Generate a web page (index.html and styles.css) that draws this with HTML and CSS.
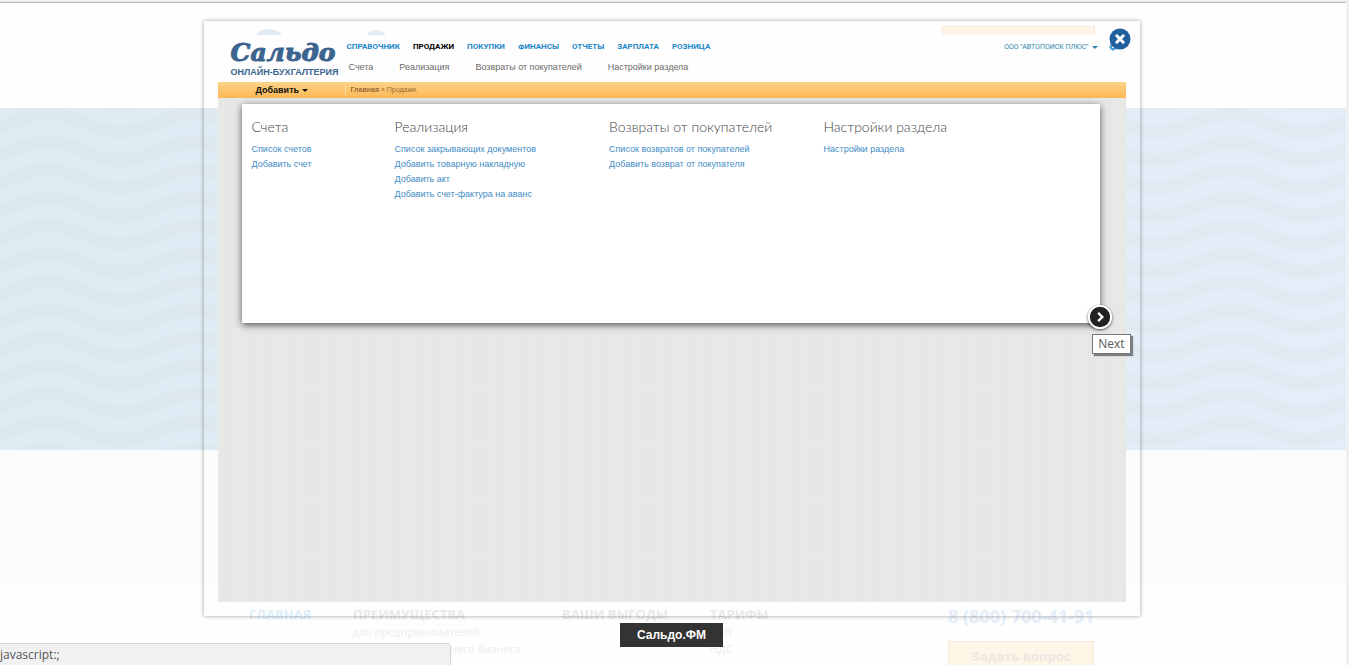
FILE: index.html
```html
<!DOCTYPE html>
<html lang="ru">
<head>
    <meta charset="UTF-8">
    <meta name="viewport" content="width=device-width, initial-scale=1.0">
    <title>Сальдо.ФМ</title>
    <link rel="stylesheet" href="styles.css">
</head>
<body>
    <div class="page">
        <header class="page-header">
            <div class="page-width page-top">
                <svg class="page-logo" width="142" height="28" viewBox="0 0 142 28" aria-hidden="true">
                    <path d="M0 14Q4 0 17 0Q30 0 34 14ZM112 10Q116 1 124 1Q133 2 137 10Z" fill="#e3eaf1"/>
                </svg>
                <button class="call-button" type="button" aria-label="Войти"></button>
            </div>
        </header>

        <section class="hero">
            <svg width="100%" height="100%" aria-hidden="true">
                <defs>
                    <pattern id="waves" width="148" height="28" patternUnits="userSpaceOnUse" x="47" y="13">
                        <path d="M0 -7C30 -7 44 11 74 11S118 -7 148 -7M0 21C30 21 44 39 74 39S118 21 148 21" fill="none" stroke="#d8e2e6" stroke-width="13" stroke-opacity="0.3"/>
                    </pattern>
                </defs>
                <rect width="100%" height="100%" fill="url(#waves)"/>
            </svg>
        </section>

        <section class="strip"></section>

        <footer class="page-footer">
            <div class="page-width footer-columns">
                <div><a class="footer-title active" href="#">ГЛАВНАЯ</a></div>
                <div>
                    <a class="footer-title" href="#">ПРЕИМУЩЕСТВА</a>
                    <a href="#">для предпринимателей</a>
                    <a href="#">для малого и среднего бизнеса</a>
                </div>
                <div><a class="footer-title" href="#">ВАШИ ВЫГОДЫ</a></div>
                <div>
                    <a class="footer-title" href="#">ТАРИФЫ</a>
                    <a href="#">УСН</a>
                    <a href="#">НДС</a>
                </div>
                <div>
                    <p class="phone">8 (800) 700-41-91</p>
                    <button class="ask-button" type="button">Задать вопрос</button>
                </div>
            </div>
        </footer>
    </div>

    <div class="overlay">
        <div class="lightbox">
            <div class="screen">
                <header class="app-header">
                    <a class="logo" href="#">
                        <span class="logo-name">Сальдо</span>
                        <span class="logo-sub">ОНЛАЙН-БУХГАЛТЕРИЯ</span>
                    </a>
                    <div class="menus">
                        <nav class="menu">
                            <a href="#">СПРАВОЧНИК</a>
                            <a class="current" href="#">ПРОДАЖИ</a>
                            <a href="#">ПОКУПКИ</a>
                            <a href="#">ФИНАНСЫ</a>
                            <a href="#">ОТЧЕТЫ</a>
                            <a href="#">ЗАРПЛАТА</a>
                            <a href="#">РОЗНИЦА</a>
                        </nav>
                        <nav class="submenu">
                            <a href="#">Счета</a>
                            <a href="#">Реализация</a>
                            <a href="#">Возвраты от покупателей</a>
                            <a href="#">Настройки раздела</a>
                        </nav>
                    </div>
                    <button class="company" type="button">
                        ООО "АВТОПОИСК ПЛЮС"
                        <span class="caret"></span>
                        <svg class="gear" width="8" height="8" viewBox="0 0 8 8" aria-hidden="true">
                            <circle cx="4" cy="4" r="2" fill="none" stroke="#1d87c9" stroke-width="1.4"/>
                            <path d="M4 0v8M0 4h8M1.2 1.2l5.6 5.6M6.8 1.2L1.2 6.8" stroke="#1d87c9" stroke-width="1" stroke-dasharray="1.6 4.8 1.6"/>
                        </svg>
                    </button>
                </header>

                <div class="toolbar">
                    <button class="add-button" type="button">Добавить <span class="caret"></span></button>
                    <p class="crumbs"><b>Главная</b> » Продажи.</p>
                </div>

                <main class="panel">
                    <section>
                        <h2>Счета</h2>
                        <a href="#">Список счетов</a>
                        <a href="#">Добавить счет</a>
                    </section>
                    <section>
                        <h2>Реализация</h2>
                        <a href="#">Список закрывающих документов</a>
                        <a href="#">Добавить товарную накладную</a>
                        <a href="#">Добавить акт</a>
                        <a href="#">Добавить счет-фактура на аванс</a>
                    </section>
                    <section>
                        <h2>Возвраты от покупателей</h2>
                        <a href="#">Список возвратов от покупателей</a>
                        <a href="#">Добавить возврат от покупателя</a>
                    </section>
                    <section>
                        <h2>Настройки раздела</h2>
                        <a href="#">Настройки раздела</a>
                    </section>
                </main>
            </div>

            <button class="close-button" type="button" aria-label="Закрыть">
                <svg width="22" height="22" viewBox="0 0 22 22">
                    <circle cx="11" cy="11" r="10.5" fill="#20609f"/>
                    <path d="M7.8 7.8l6.4 6.4M14.2 7.8l-6.4 6.4" stroke="#fff" stroke-width="3" stroke-linecap="round"/>
                </svg>
            </button>
            <button class="next-button" type="button" aria-label="Next">
                <svg width="24" height="24" viewBox="0 0 26 26">
                    <circle cx="13" cy="13" r="12" fill="#222" stroke="#fff" stroke-width="2"/>
                    <path d="M11 8.5l4.5 4.5-4.5 4.5" fill="none" stroke="#fff" stroke-width="2.6"/>
                </svg>
            </button>
            <span class="tooltip">Next</span>
        </div>
        <p class="caption">Сальдо.ФМ</p>
    </div>

    <div class="status">javascript:;</div>
</body>
</html>
```
FILE: styles.css
```css
* {
    box-sizing: border-box;
}

body {
    position: relative;
    margin: 0;
    height: 100vh;
    overflow: hidden;
    background: #fefefe;
    border-top: 2px solid #f0f0f0;
    border-right: 3px solid #f0f0f0;
    font-family: "Liberation Sans", Arial, sans-serif;
}

a {
    color: inherit;
    text-decoration: none;
}

p,
h2 {
    margin: 0;
    font-weight: normal;
}

button {
    margin: 0;
    padding: 0;
    border: none;
    background: none;
    font-family: inherit;
    cursor: pointer;
}

svg {
    display: block;
}

/* page behind the lightbox */
.page-width {
    width: 848px;
    max-width: 100%;
    margin: 0 auto;
    padding-right: 2px;
}

.page-header {
    height: 106px;
    padding-top: 23px;
    border-top: 1px solid #b4b4b4;
}

.page-top {
    display: flex;
    justify-content: space-between;
}

.page-logo {
    margin: 3px 0 0 3px;
}

.call-button {
    width: 153px;
    height: 28px;
    border: 1px solid #f9e6d9;
    background: #fff6e9;
}

.hero {
    height: 342px;
    background: linear-gradient(to right, #deebf3, #e4eef8);
}

.strip {
    height: 133px;
    background: #fbfbfb;
    border-bottom: 1px solid #f5f5f5;
}

.page-footer {
    padding-top: 22px;
    font-family: "Open Sans", sans-serif;
}

.footer-columns {
    display: grid;
    grid-template-columns: 104px 209px 148px 238px 1fr;
}

.footer-columns a {
    display: block;
    font-size: 11px;
    line-height: 17px;
    color: #ededed;
    white-space: nowrap;
}

.footer-columns .footer-title {
    font-size: 13px;
    line-height: 18px;
    font-weight: bold;
    color: #e9e9e9;
}

.footer-columns .active {
    color: #dceefa;
}

.phone {
    font-size: 18px;
    line-height: 22px;
    font-weight: bold;
    color: #e4eef9;
    white-space: nowrap;
}

.ask-button {
    width: 146px;
    height: 30px;
    margin-top: 14px;
    border: 1px solid #f9e6d9;
    background: #fff5e6;
    font-size: 13px;
    font-weight: bold;
    font-family: inherit;
    color: #ece7e2;
}

/* lightbox */
.overlay {
    position: absolute;
    inset: 0 3px 0 0;
    padding-top: 19px;
    display: flex;
    flex-direction: column;
    align-items: center;
}

.lightbox {
    position: relative;
    width: 936px;
    max-width: 100%;
    padding: 14px;
    box-shadow: 0 0 4px rgba(0, 0, 0, 0.4);
}

.screen {
    aspect-ratio: 908 / 567;
    overflow: hidden;
    background:
        repeating-linear-gradient(90deg, rgba(255, 255, 255, 0.12) 0 1px, transparent 1px 9px, rgba(210, 212, 210, 0.1) 9px 11px, transparent 11px 21px),
        repeating-linear-gradient(0deg, rgba(255, 255, 255, 0.1) 0 1px, transparent 1px 7px),
        #e7e7e5;
}

.app-header {
    display: flex;
    height: 47px;
    background: #fefefe;
}

.logo {
    width: 129px;
    padding-left: 13px;
    color: #3b648f;
}

.logo-name,
.logo-sub {
    display: block;
    white-space: nowrap;
}

.logo-name {
    height: 32px;
    font-family: "DejaVu Serif", serif;
    font-size: 25px;
    line-height: 35px;
    font-weight: bold;
    font-style: italic;
    -webkit-text-stroke: 1px #3b648f;
}

.logo-sub {
    font-size: 9px;
    line-height: 10px;
    font-weight: bold;
}

.menus {
    flex: 1;
    padding-top: 7px;
}

.menu,
.submenu {
    display: flex;
    white-space: nowrap;
}

.menu {
    gap: 13px;
    font-family: Roboto, sans-serif;
    font-size: 8px;
    line-height: 10px;
    font-weight: bold;
    color: #1d87c9;
}

.menu .current {
    color: #000;
}

.submenu {
    gap: 26px;
    padding: 9px 0 0 2px;
    font-size: 9px;
    line-height: 12px;
    color: #6b6b6b;
}

.company {
    display: flex;
    align-items: center;
    align-self: flex-start;
    gap: 3px;
    margin-right: 9px;
    padding-top: 7px;
    font-family: Roboto, sans-serif;
    font-size: 7px;
    line-height: 10px;
    color: #2b86ac;
    white-space: nowrap;
}

.gear {
    margin-left: 8px;
}

.caret {
    display: inline-block;
    border: 3px solid transparent;
    border-top-color: currentColor;
    border-bottom: none;
    vertical-align: middle;
}

.toolbar {
    display: flex;
    align-items: center;
    height: 16px;
    padding-left: 38px;
    background: linear-gradient(#fbd489, #fdb755);
}

.add-button {
    width: 89px;
    font-size: 9px;
    line-height: 12px;
    font-weight: bold;
    text-align: left;
    color: #111;
}

.crumbs {
    padding-left: 5px;
    border-left: 1px solid #fde0a8;
    font-size: 7px;
    line-height: 10px;
    color: #9a6a35;
}

.panel {
    display: grid;
    grid-template-columns: 2fr 3fr 3fr 4fr;
    height: 219px;
    margin: 6px 26px 0 24px;
    padding-top: 14px;
    background: #fff;
    box-shadow: 0 2px 7px rgba(0, 0, 0, 0.65);
}

.panel section {
    padding-left: 10px;
}

.panel h2 {
    margin-bottom: 6px;
    font-family: Lato, sans-serif;
    font-size: 14px;
    line-height: 18px;
    font-weight: 300;
    color: #444;
    white-space: nowrap;
}

.panel a {
    display: block;
    font-size: 9px;
    line-height: 15px;
    color: #3f8cc5;
    white-space: nowrap;
}

.close-button {
    position: absolute;
    top: 7px;
    right: 9px;
}

.next-button {
    position: absolute;
    top: 284px;
    right: 28px;
    border-radius: 50%;
    box-shadow: 0 1px 3px rgba(0, 0, 0, 0.7);
}

.tooltip {
    position: absolute;
    top: 313px;
    right: 9px;
    padding: 0 5px;
    border: 1px solid #767676;
    background: #fff;
    box-shadow: 2px 2px 1px rgba(0, 0, 0, 0.45);
    font-family: "Open Sans", sans-serif;
    font-size: 12px;
    line-height: 18px;
    color: #575757;
}

.caption {
    margin-top: 7px;
    padding: 0 17px;
    background: #333;
    font-size: 12px;
    line-height: 24px;
    font-weight: bold;
    color: #fff;
}

.status {
    position: absolute;
    left: 0;
    bottom: 0;
    width: 451px;
    height: 22px;
    border: 1px solid #d8d8d8;
    border-width: 1px 1px 0 0;
    border-radius: 0 4px 0 0;
    background: #f1f1f1;
    font-family: "Open Sans", sans-serif;
    font-size: 12px;
    line-height: 22px;
    color: #555;
}
```
